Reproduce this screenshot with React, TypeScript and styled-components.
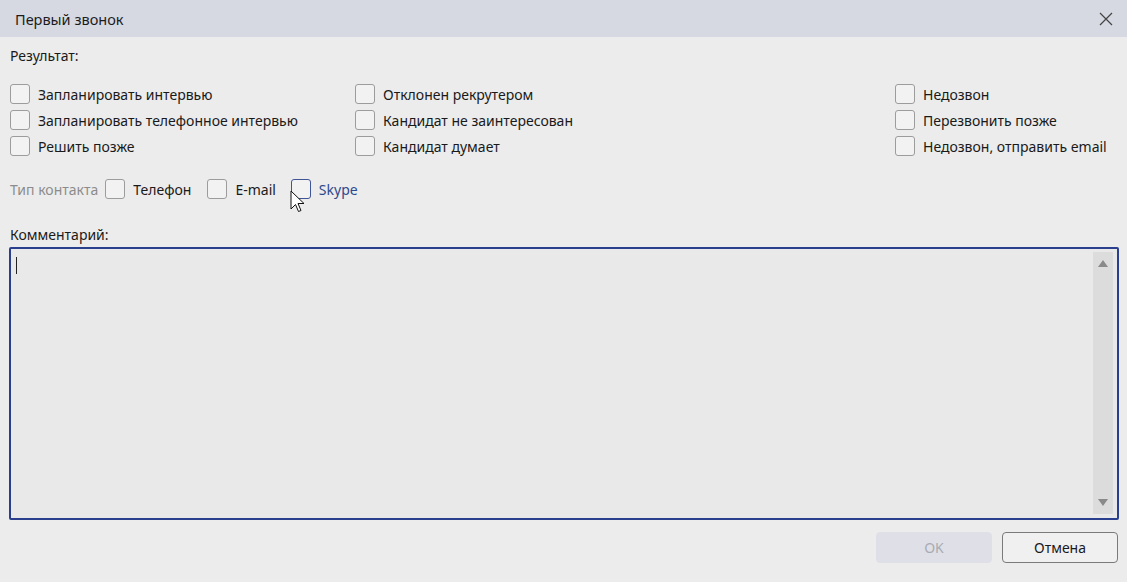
import React from "react";
import styled, { createGlobalStyle } from "styled-components";

const Global = createGlobalStyle`
  html, body { margin: 0; padding: 0; background: #ececec; }
  body { font-family: "Noto Sans", "Open Sans", sans-serif; color: #1a1a1a; }
`;

const Window = styled.div`
  width: 1127px;
  height: 582px;
  display: flex;
  flex-direction: column;
  background: #ececec;
  position: relative;
  overflow: hidden;
`;

const TitleBar = styled.div`
  height: 37px;
  flex: none;
  background: #d6d8e2;
  display: flex;
  align-items: center;
  justify-content: space-between;
  padding: 0 11px 0 15px;
  font-size: 14.5px;
  color: #1c1c1c;
`;

const CloseBtn = styled.div`
  width: 20px;
  height: 20px;
  display: flex;
  align-items: center;
  justify-content: center;
`;

const Body = styled.div`
  flex: 1;
  display: flex;
  flex-direction: column;
  padding: 0 8px 0 10px;
`;

const Label = styled.div`
  font-size: 14px;
  line-height: 20px;
  height: 20px;
  margin-top: ${(p: { $mt: number }) => p.$mt}px;
`;

const OptionsGrid = styled.div`
  display: grid;
  grid-template-columns: 345px 540px auto;
  grid-auto-flow: column;
  grid-template-rows: repeat(3, 26px);
  margin-top: 15px;
`;

const Option = styled.label`
  display: flex;
  align-items: center;
  gap: 8px;
  font-size: 14px;
  white-space: nowrap;
  color: ${(p: { $hover?: boolean }) => (p.$hover ? "#2e4a8c" : "#1a1a1a")};
`;

const Box = styled.span<{ $hover?: boolean }>`
  width: 18px;
  height: 18px;
  flex: none;
  border: 1px solid ${(p) => (p.$hover ? "#3f5595" : "#9c9c9c")};
  border-radius: 3px;
  background: #f2f2f2;
`;

const ContactRow = styled.div`
  display: flex;
  align-items: center;
  height: 26px;
  margin-top: 17px;
  gap: 0;
`;

const Muted = styled.span`
  font-size: 14px;
  color: #8c8c8c;
  margin-right: 7px;
`;

const ContactOption = styled(Option)`
  margin-right: ${(p: { $mr?: number }) => p.$mr ?? 0}px;
`;

const Comment = styled.div`
  margin-top: 2px;
  margin-left: -1px;
  height: 273px;
  box-sizing: border-box;
  border: 2px solid #2a3f8e;
  border-radius: 2px;
  background: #e9e9e9;
  display: flex;
  padding: 3px 4px 4px 5px;
`;

const TextArea = styled.div`
  flex: 1;
  position: relative;
`;

const Caret = styled.span`
  display: block;
  width: 1px;
  height: 17px;
  background: #222;
  margin-top: 5px;
`;

const ScrollBar = styled.div`
  width: 20px;
  flex: none;
  background: #dcdcdc;
  display: flex;
  flex-direction: column;
  justify-content: space-between;
  align-items: center;
  padding: 8px 0;
`;

const Footer = styled.div`
  display: flex;
  justify-content: flex-end;
  gap: 10px;
  margin-top: 12px;
  padding-right: 1px;
`;

const Button = styled.div<{ $disabled?: boolean }>`
  width: 116px;
  height: 31px;
  box-sizing: border-box;
  border-radius: 4px;
  display: flex;
  align-items: center;
  justify-content: center;
  font-size: 14px;
  background: ${(p) => (p.$disabled ? "#dfe0e7" : "#f0f0f0")};
  color: ${(p) => (p.$disabled ? "#a9abb3" : "#1a1a1a")};
  border: 1px solid ${(p) => (p.$disabled ? "#dfe0e7" : "#7a7a7a")};
`;

const Pointer = styled.svg`
  position: absolute;
  left: 290px;
  top: 190px;
`;

const Triangle = ({ up }: { up?: boolean }) => (
  <svg width="10" height="7" viewBox="0 0 10 7">
    <path d={up ? "M5 0 L10 7 L0 7 Z" : "M0 0 L10 0 L5 7 Z"} fill="#8a8a8a" />
  </svg>
);

const col1 = ["Запланировать интервью", "Запланировать телефонное интервью", "Решить позже"];
const col2 = ["Отклонен рекрутером", "Кандидат не заинтересован", "Кандидат думает"];
const col3 = ["Недозвон", "Перезвонить позже", "Недозвон, отправить email"];

export default function App() {
  return (
    <Window>
      <Global />
      <TitleBar>
        <span>Первый звонок</span>
        <CloseBtn>
          <svg width="14" height="14" viewBox="0 0 14 14">
            <path d="M1 1 L13 13 M13 1 L1 13" stroke="#444" strokeWidth="1.2" />
          </svg>
        </CloseBtn>
      </TitleBar>
      <Body>
        <Label $mt={9}>Результат:</Label>
        <OptionsGrid>
          {[...col1, ...col2, ...col3].map((t) => (
            <Option key={t}>
              <Box />
              {t}
            </Option>
          ))}
        </OptionsGrid>
        <ContactRow>
          <Muted>Тип контакта</Muted>
          <ContactOption $mr={16}>
            <Box />
            Телефон
          </ContactOption>
          <ContactOption $mr={15}>
            <Box />
            E-mail
          </ContactOption>
          <ContactOption $hover>
            <Box $hover />
            Skype
          </ContactOption>
        </ContactRow>
        <Label $mt={23}>Комментарий:</Label>
        <Comment>
          <TextArea>
            <Caret />
          </TextArea>
          <ScrollBar>
            <Triangle up />
            <Triangle />
          </ScrollBar>
        </Comment>
        <Footer>
          <Button $disabled>OK</Button>
          <Button>Отмена</Button>
        </Footer>
      </Body>
      <Pointer width="16" height="24" viewBox="0 0 16 24">
        <path d="M1 1 L1 19 L5.5 14.5 L8.5 21.5 L11 20.5 L8 13.5 L14 13.5 Z" fill="#fff" stroke="#111" strokeWidth="1" strokeLinejoin="round" />
      </Pointer>
    </Window>
  );
}
